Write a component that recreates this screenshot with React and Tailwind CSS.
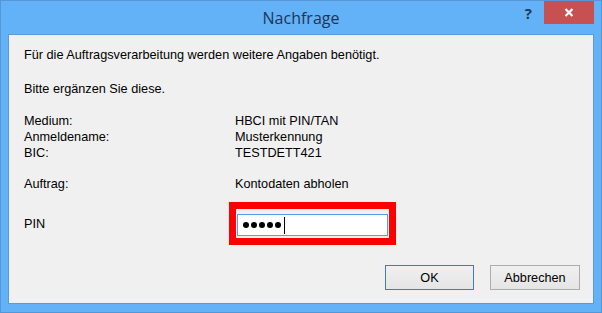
export default function App() {
  const sans = { fontFamily: '"Liberation Sans", Arial, sans-serif' };
  return (
    <div className="w-[602px] h-[313px] bg-[#63b1f7] border border-[#5596d6] flex flex-col overflow-hidden">
      {/* title bar */}
      <div className="relative h-[33px] flex items-start justify-end pr-[7px]">
        <div
          className="absolute left-0 right-0 top-[6px] text-center text-[16px] leading-[22px] text-[#1d3557]"
          style={{ fontFamily: '"Open Sans", "Noto Sans", sans-serif' }}
        >
          Nachfrage
        </div>
        <div
          className="relative mt-[4px] mr-[12px] text-[15px] leading-[16px] font-bold text-[#1b3a5c]"
          style={{ fontFamily: '"Open Sans", sans-serif' }}
        >
          ?
        </div>
        <div className="relative -mt-px w-[50px] h-[24px] bg-[#c75050] flex items-center justify-center">
          <svg width="10" height="9" viewBox="0 0 10 9">
            <path d="M1.5 1 L8.5 8 M8.5 1 L1.5 8" stroke="white" strokeWidth="2.2" />
          </svg>
        </div>
      </div>
      {/* content */}
      <div className="ml-[7px] w-[586px] h-[270px] bg-[#f0f0f0] border border-[#5a9ad8] flex flex-col text-[12.7px] leading-[16px] text-black" style={sans}>
        <div className="pl-[15px] pt-[12px]">
          <div className="h-4">Für die Auftragsverarbeitung werden weitere Angaben benötigt.</div>
          <div className="h-4 mt-[18px]">Bitte ergänzen Sie diese.</div>
          <div className="mt-[16px] flex">
            <div className="w-[211px]">
              <div className="h-4">Medium:</div>
              <div className="h-4">Anmeldename:</div>
              <div className="h-4">BIC:</div>
            </div>
            <div>
              <div className="h-4">HBCI mit PIN/TAN</div>
              <div className="h-4">Musterkennung</div>
              <div className="h-4">TESTDETT421</div>
            </div>
          </div>
          <div className="mt-[15px] flex h-4">
            <div className="w-[211px]">Auftrag:</div>
            <div>Kontodaten abholen</div>
          </div>
          <div className="mt-[10px] flex items-center">
            <div className="w-[205px]">PIN</div>
            <div className="w-[167px] h-[43px] border-[7px] border-[#ff0000] pl-px pt-[5px]">
              <div className="w-[151px] h-[22px] bg-white border border-[#569de5] flex items-center pl-[5px] gap-[2px]">
                <span className="w-[6px] h-[6px] rounded-full bg-black" />
                <span className="w-[6px] h-[6px] rounded-full bg-black" />
                <span className="w-[6px] h-[6px] rounded-full bg-black" />
                <span className="w-[6px] h-[6px] rounded-full bg-black" />
                <span className="w-[6px] h-[6px] rounded-full bg-black" />
                <span className="ml-px w-px h-[17px] bg-black" />
              </div>
            </div>
          </div>
        </div>
        <div className="mt-auto mb-[13px] mr-[13px] flex justify-end gap-[16px]">
          <div className="w-[89px] h-[25px] flex items-center justify-center border border-[#3c7fb1] bg-gradient-to-b from-[#f0f0f0] to-[#e5e5e5]">OK</div>
          <div className="w-[90px] h-[25px] flex items-center justify-center border border-[#acacac] bg-gradient-to-b from-[#f0f0f0] to-[#e5e5e5]">Abbrechen</div>
        </div>
      </div>
    </div>
  );
}
